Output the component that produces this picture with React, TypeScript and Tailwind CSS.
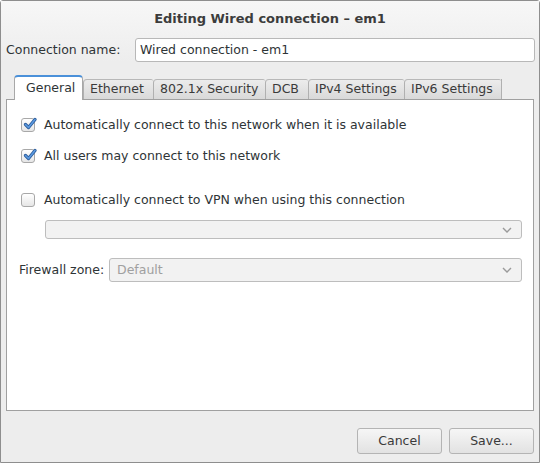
import React from 'react';

const font = { fontFamily: '"DejaVu Sans", sans-serif' };

const Check = ({ checked }: { checked?: boolean }) => (
  <span className="relative inline-block h-[14px] w-[14px] shrink-0 rounded-[3px] border border-[#a8a8a8] bg-gradient-to-b from-[#ffffff] to-[#e6e6e6]">
    {checked && (
      <svg className="absolute left-[1px] top-[-2px]" width="14" height="14" viewBox="0 0 14 14">
        <path d="M2.5 7.5 L5.5 10.5 L12 2.5" fill="none" stroke="#2a5a9a" strokeWidth="3.2" strokeLinecap="round" strokeLinejoin="round" />
        <path d="M2.5 7.5 L5.5 10.5 L12 2.5" fill="none" stroke="#5b9ae0" strokeWidth="1.6" strokeLinecap="round" strokeLinejoin="round" />
      </svg>
    )}
  </span>
);

const Chevron = () => (
  <svg width="12" height="8" viewBox="0 0 12 8">
    <path d="M2 2 L6 6 L10 2" fill="none" stroke="#9a9a9a" strokeWidth="1.4" />
  </svg>
);

const tabs = [
  { label: 'Ethernet', w: 'w-[70px]' },
  { label: '802.1x Security', w: 'w-[112px]' },
  { label: 'DCB', w: 'w-[43px]' },
  { label: 'IPv4 Settings', w: 'w-[96px]' },
  { label: 'IPv6 Settings', w: 'w-[97px]' },
];

export default function App() {
  return (
    <div style={font} className="flex h-[463px] w-[540px] flex-col rounded-t-[3px] border border-[#8e8e8e] bg-[#ededed] text-[12.5px] text-[#2e3436]">
      <div className="bg-gradient-to-b from-[#f7f7f7] to-[#ededed]">
        <div className="flex h-[34px] items-center justify-center pt-[1px] text-[13px] font-bold text-[#3c3c3c]">
          Editing Wired connection – em1
        </div>
        <div className="mt-[3px] flex items-center pl-[5px]">
          <span className="w-[129px]">Connection name:</span>
          <div className="flex h-[24px] w-[400px] items-center rounded-[3px] border border-[#b8b8b8] bg-white pl-[4px]">
            Wired connection - em1
          </div>
        </div>
      </div>

      <div className="mt-[13px] flex items-end pl-[13px]">
        <div className="relative z-10 -mb-[1px] flex h-[25px] w-[69px] items-center rounded-t-[4px] border border-b-0 border-[#a8a8a8] border-t-[2px] border-t-[#4a90d9] bg-white pl-[11px]">
          General
        </div>
        {tabs.map((t) => (
          <div key={t.label} className={`flex h-[20px] ${t.w} items-center rounded-tl-[4px] rounded-tr-[2px] border border-b-0 border-l-[#b0b0b0] border-r-0 border-t-[#b8b8b8] bg-gradient-to-b from-[#ececec] to-[#d9d9d9] pl-[6px] text-[#3a3a3a]`}>
            {t.label}
          </div>
        ))}
        <div className="h-[20px] w-0 border-r border-[#b0b0b0]" />
      </div>

      <div className="mx-[5px] flex h-[312px] flex-col border border-[#a0a0a0] bg-white px-[14px]">
        <div className="mt-[17px] flex h-[16px] items-center gap-[9px]">
          <Check checked />
          <span>Automatically connect to this network when it is available</span>
        </div>
        <div className="mt-[15px] flex h-[16px] items-center gap-[9px]">
          <Check checked />
          <span>All users may connect to this network</span>
        </div>
        <div className="mt-[28px] flex h-[16px] items-center gap-[9px]">
          <Check />
          <span>Automatically connect to VPN when using this connection</span>
        </div>
        <div className="ml-[24px] mr-[-3px] mt-[12px] flex h-[19px] items-center justify-end rounded-[3px] border border-[#bdbdbd] bg-[#f2f2f2] pr-[8px]">
          <Chevron />
        </div>
        <div className="mt-[19px] flex items-center">
          <span className="-ml-[2px] w-[90px]">Firewall zone:</span>
          <div className="mr-[-3px] flex h-[24px] flex-1 items-center justify-between rounded-[3px] border border-[#bdbdbd] bg-[#f2f2f2] pl-[7px] pr-[8px] text-[#a0a0a0]">
            <span>Default</span>
            <Chevron />
          </div>
        </div>
      </div>

      <div className="mt-[17px] flex justify-end gap-[7px] pr-[5px]">
        {['Cancel', 'Save...'].map((b) => (
          <div key={b} className="flex h-[26px] w-[85px] items-center justify-center rounded-[3px] border border-[#b4b4b4] bg-gradient-to-b from-[#f6f6f6] to-[#e2e2e2] text-[#3a3a3a]">
            {b}
          </div>
        ))}
      </div>
    </div>
  );
}
